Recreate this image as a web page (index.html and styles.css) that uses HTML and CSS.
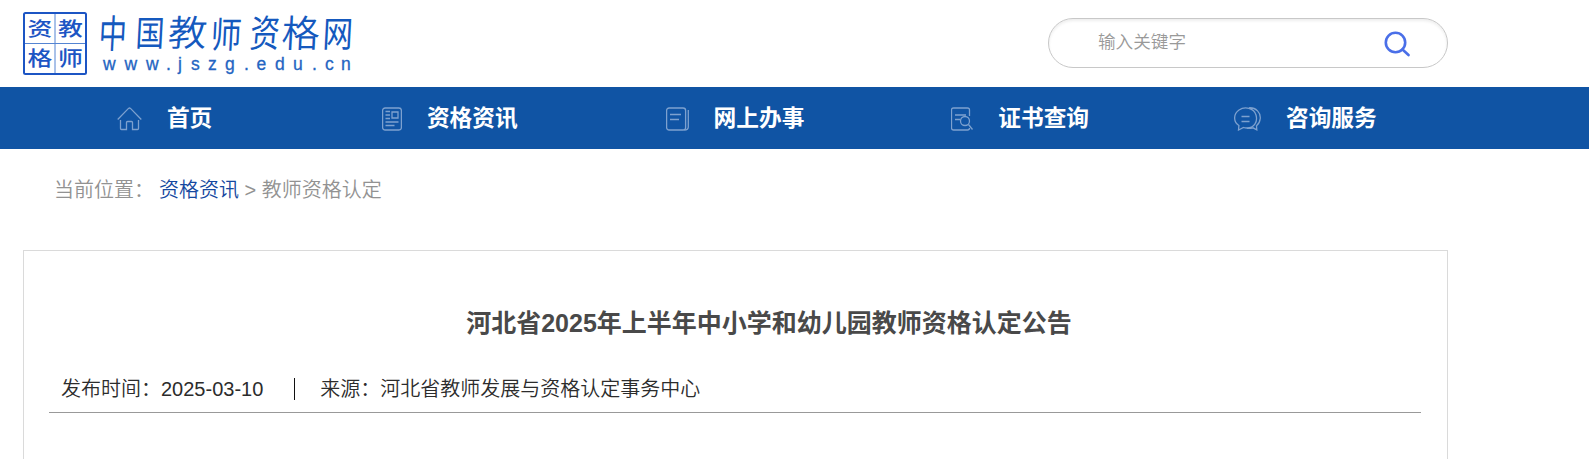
FILE: index.html
```html
<!DOCTYPE html>
<html lang="zh-CN">
<head>
<meta charset="utf-8">
<title>中国教师资格网</title>
<link rel="stylesheet" href="styles.css">
</head>
<body>
<header class="header">
  <svg class="logo" width="340" height="79" viewBox="20 0 340 79" role="img" aria-label="中国教师资格网">
    <rect class="seal" x="24" y="13" width="62" height="61" rx="1.5"/>
    <path class="seal-line" d="M55 14v59M25 43.5h60"/>
    <g class="seal-text">
      <text transform="translate(27.500 35.500) scale(1.08 .84)">资</text><text transform="translate(58 35.500) scale(1.08 .84)">教</text>
      <text transform="translate(27.500 66) scale(1.08 .88)">格</text><text transform="translate(58 66) scale(1.08 .88)">师</text>
    </g>
    <g class="brand">
      <text transform="translate(98 48) skewX(-3) scale(.78 1.08)">中</text>
      <text transform="translate(135 46) skewX(-3) scale(.8 .98)">国</text>
      <text class="wide" transform="translate(167 46) skewX(-5) scale(1.08 1)">教</text>
      <text transform="translate(210 48) skewX(-3) scale(.86 1)">师</text>
      <text transform="translate(249 47) skewX(-5) scale(.82 1.05)">资</text>
      <text class="wide" transform="translate(281 47) skewX(-3) scale(1.06 1.04)">格</text>
      <text transform="translate(322 47) skewX(-3) scale(.84 1)">网</text>
    </g>
    <text class="domain" y="69.500" x="103 124.500 146 166 178 191 208 225 244 256.500 275 293 312 325 341">www.jszg.edu.cn</text>
  </svg>
  <form class="search">
    <input class="search-input" type="text" placeholder="输入关键字">
    <svg class="search-icon" width="26" height="26" viewBox="0 0 26 26"><circle cx="11.500" cy="11.500" r="9.700"/><path d="M18.500 18.500l6 5.500"/></svg>
  </form>
</header>
<nav class="nav">
  <ul class="nav-list">
    <li class="nav-item"><svg class="nav-icon" width="25" height="24" viewBox="0 0 25 24"><path d="M.7 12.500L11.500 1.400q1-.8 2 0L24.300 12.500M3.500 13v8.500q0 1 1 1h5v-7q0-1 1-1h4q1 0 1 1v7h5q1 0 1-1V13"/></svg>首页</li>
    <li class="nav-item"><svg class="nav-icon" width="20" height="24" viewBox="0 0 20 24"><rect x=".6" y="1" width="18.800" height="22" rx="2.500"/><path d="M10 5h6v6h-6zM3.500 4.500H8M3.500 8H8M3.500 11.500H8M3.500 15h13M3.500 18.500h9"/></svg>资格资讯</li>
    <li class="nav-item"><svg class="nav-icon" width="23" height="24" viewBox="0 0 23 24"><rect x=".6" y="1" width="19" height="22" rx="2.500"/><path d="M4 7.500h11M4 12.500h9M22.300 3v17q0 3-4 3"/></svg>网上办事</li>
    <li class="nav-item"><svg class="nav-icon" width="22" height="24" viewBox="0 0 22 24"><path d="M18.500 9V3q0-2-2-2h-14q-2 0-2 2v18q0 2 2 2h14q2 0 2-2M4 8h11M4 12.500h5"/><circle cx="14" cy="14" r="4.500"/><path d="M17.500 17.500l4 5"/></svg>证书查询</li>
    <li class="nav-item"><svg class="nav-icon" width="27" height="24" viewBox="0 0 27 24"><path d="M4.500 23l.4-4.500C-.8 15-.8 7 5 3s15-2 17 5-2 13-9 13q-2 0-3.500-.5zM15 .8c7-.5 12 5 11.200 11-.3 3-1.600 5.300-3.700 7l.3 4-3.800-2q-3 .8-6 .5M7.500 9.500h8M7.500 14.500h8"/></svg>咨询服务</li>
  </ul>
</nav>
<main class="main">
  <div class="crumbs"><span class="crumb-label">当前位置：</span><a class="crumb-link">资格资讯</a> &gt; 教师资格认定</div>
  <article class="article">
    <h1 class="title">河北省2025年上半年中小学和幼儿园教师资格认定公告</h1>
    <div class="meta"><span class="date">发布时间：2025-03-10</span><span class="source">来源：河北省教师发展与资格认定事务中心</span></div>
  </article>
</main>
</body>
</html>
```
FILE: styles.css
```css
* { box-sizing: border-box; }
html, body { height: 100%; }
body {
  margin: 0;
  overflow: hidden;
  background: #fff;
  font-family: "Liberation Sans", "Noto Sans CJK SC", sans-serif;
}
.header {
  display: flex;
  justify-content: space-between;
  align-items: flex-start;
  width: 1448px;
  height: 87px;
  padding-left: 20px;
}
.logo { display: block; overflow: visible; font-family: "Noto Sans CJK SC", sans-serif; }
.seal { fill: none; stroke: #1c55c4; stroke-width: 2; }
.seal-line { fill: none; stroke: #5484d2; stroke-width: 1; }
.seal-text { fill: #1c55c4; font-size: 23px; font-weight: 500; }
.brand { fill: #1559be; font-size: 36px; font-weight: 400; }
.wide { font-weight: 350; }
.domain { fill: #2465c2; stroke: #2465c2; stroke-width: .3; font-family: "Liberation Sans", sans-serif; font-size: 17.500px; }
.search {
  display: flex;
  align-items: center;
  width: 400px;
  height: 50px;
  margin-top: 18px;
  padding: 0 37px 0 49px;
  border: 1px solid #c8c8c8;
  border-radius: 25px;
  box-shadow: inset 0 2px 3px #eee;
}
.search-input {
  flex: 1;
  min-width: 0;
  height: 40px;
  padding: 0 0 6px;
  border: 0;
  outline: 0;
  background: transparent;
  font: 350 17.600px/26px "Noto Sans CJK SC", sans-serif;
}
.search-input::placeholder { color: #999; opacity: 1; }
.search-icon { margin-top: 2px; fill: none; stroke: #4a6fe8; stroke-width: 2.600; stroke-linecap: round; }
.nav { height: 62px; background: #1054a4; }
.nav-list {
  display: grid;
  grid-template-columns: repeat(5, 285.200px);
  height: 62px;
  margin: 0;
  padding: 0 0 0 22px;
  list-style: none;
}
.nav-item {
  display: flex;
  justify-content: center;
  align-items: center;
  gap: 25px;
  color: #fff;
  font-size: 22.700px;
  font-weight: 700;
  line-height: 34px;
}
.nav-icon { margin-top: 1px; fill: none; stroke: #7da1cf; stroke-width: 1.300; }
.main { width: 1448px; padding-left: 23px; }
.crumbs {
  height: 101px;
  padding: 26px 0 0 31px;
  color: #929292;
  font-size: 20px;
  font-weight: 350;
  line-height: 30px;
}
.crumb-label { margin-right: 5px; }
.crumb-link { color: #1548a0; }
.article {
  height: 230px;
  padding: 54px 26px 0 25px;
  border: 1px solid #dadada;
}
.title {
  margin: 0;
  padding-left: 68px;
  color: #494949;
  font-size: 25px;
  font-weight: 700;
  line-height: 36px;
  text-align: center;
}
.meta {
  display: flex;
  align-items: center;
  height: 72px;
  padding: 25px 0 0 12px;
  border-bottom: 1px solid #999;
  color: #2c2c2c;
  font-size: 20px;
  font-weight: 350;
  line-height: 22px;
}
.date { padding-right: 31px; border-right: 1px solid #111; }
.source { padding-left: 25px; }
```
